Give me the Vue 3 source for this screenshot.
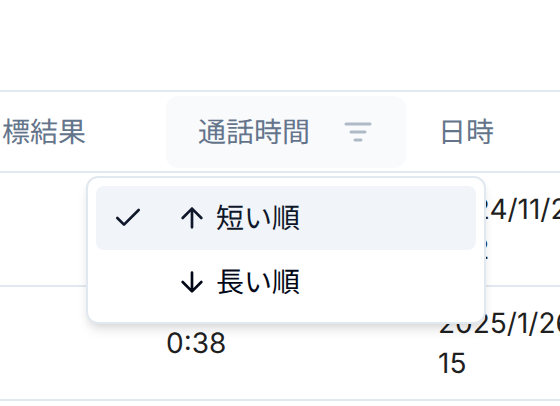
<script setup>
import { ref } from 'vue'

const options = [
  { value: 'asc', label: '短い順' },
  { value: 'desc', label: '長い順' },
]
const order = ref('asc')

const rows = [
  { duration: '', date: '2024/11/2', time: '17:2' },
  { duration: '0:38', date: '2025/1/26', time: '15' },
]
</script>

<template>
  <main class="page">
    <table class="calls">
      <colgroup>
        <col class="col-result" />
        <col class="col-duration" />
        <col />
      </colgroup>
      <thead>
        <tr>
          <th class="result" scope="col">標結果</th>
          <th scope="col">
            <div class="sorter">
              <button class="trigger" type="button" aria-haspopup="menu" aria-expanded="true">
                <span>通話時間</span>
                <svg class="icon filter" viewBox="0 0 32 32" aria-hidden="true">
                  <path d="M4 8H28M9 16H23M13 24H19" />
                </svg>
              </button>
              <div class="menu" role="menu">
                <button
                  v-for="option in options"
                  :key="option.value"
                  class="item"
                  :class="{ active: order === option.value }"
                  type="button"
                  role="menuitemradio"
                  :aria-checked="order === option.value"
                  @click="order = option.value"
                >
                  <span class="mark">
                    <svg v-if="order === option.value" class="icon" viewBox="0 0 24 24" aria-hidden="true">
                      <path d="M20 6 9 17l-5-5" />
                    </svg>
                  </span>
                  <svg class="icon arrow" viewBox="0 0 24 24" aria-hidden="true">
                    <path v-if="option.value === 'asc'" d="m5 12 7-7 7 7M12 19V5" />
                    <path v-else d="M12 5v14M19 12l-7 7-7-7" />
                  </svg>
                  <span>{{ option.label }}</span>
                </button>
              </div>
            </div>
          </th>
          <th scope="col">日時</th>
        </tr>
      </thead>
      <tbody>
        <tr v-for="row in rows" :key="row.date">
          <td></td>
          <td>{{ row.duration }}</td>
          <td>{{ row.date }}<br />{{ row.time }}</td>
        </tr>
      </tbody>
    </table>
  </main>
</template>

<style>
body {
  margin: 0;
  background: #fff;
}
</style>

<style scoped>
.page {
  padding-top: 90px;
  overflow: hidden;
  font-family: Inter, "Noto Sans CJK JP", sans-serif;
  font-size: 28px;
  line-height: 40px;
  text-rendering: geometricPrecision;
  color: #1f1f1f;
}

.calls {
  width: 100%;
  table-layout: fixed;
  border-collapse: separate;
  border-spacing: 0;
  border-top: 2px solid #e2e8f0;
}

.col-result {
  width: 150px;
}

.col-duration {
  width: 272px;
}

th,
td {
  border-bottom: 2px solid #e2e8f0;
  text-align: left;
  vertical-align: middle;
  white-space: nowrap;
}

th {
  padding: 4px 16px 3px;
  font-weight: 400;
  color: #64748b;
}

th.result {
  padding-left: 2px;
}

td {
  padding: 16px;
}

button {
  border: 0;
  font: inherit;
  text-align: left;
  text-rendering: inherit;
  cursor: pointer;
}

.sorter {
  position: relative;
}

.trigger {
  display: flex;
  align-items: center;
  justify-content: space-between;
  width: 100%;
  height: 72px;
  padding: 0 32px;
  border-radius: 12px;
  background: #f8fafc;
  color: #64748b;
}

.icon {
  flex: none;
  width: 32px;
  height: 32px;
  fill: none;
  stroke: currentColor;
  stroke-width: 2;
  stroke-linecap: round;
  stroke-linejoin: round;
}

.filter {
  stroke: #b0bac6;
  stroke-width: 3;
}

.menu {
  position: absolute;
  top: 80px;
  right: -80px;
  z-index: 1;
  box-sizing: border-box;
  width: 400px;
  padding: 8px;
  border: 2px solid #e2e8f0;
  border-radius: 12px;
  background: #fff;
  box-shadow: 0 8px 12px -2px rgb(0 0 0 / 10%), 0 4px 8px -4px rgb(0 0 0 / 10%);
}

.item {
  display: flex;
  align-items: center;
  width: 100%;
  height: 64px;
  padding: 0 16px;
  border-radius: 8px;
  background: transparent;
  color: #020817;
}

.item.active {
  background: #f1f5f9;
  color: #0f172a;
}

.mark {
  display: flex;
  width: 64px;
}

.arrow {
  margin-right: 8px;
}
</style>
